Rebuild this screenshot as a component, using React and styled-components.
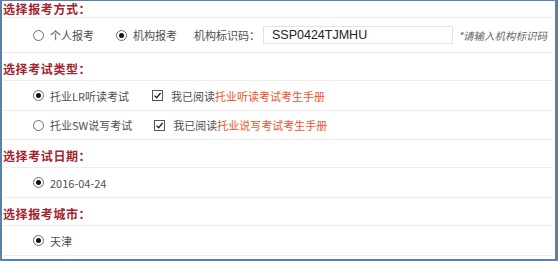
import React from "react";
import styled, { createGlobalStyle } from "styled-components";

const GlobalStyle = createGlobalStyle`
	html, body {
		margin: 0;
		padding: 0;
		background: #ffffff;
	}
	body {
		font-family: "Noto Sans CJK SC", "Liberation Sans", sans-serif;
	}
`;

const Frame = styled.div`
	box-sizing: border-box;
	width: 558px;
	height: 261px;
	border-style: solid;
	border-color: #5d80a8;
	border-width: 1px 3px 2px 2px;
	padding: 0 2px 0 1px;
	background: #fff;
	overflow: hidden;
`;

const Title = styled.div`
	height: 16px;
	line-height: 16px;
	padding: ${({ $first }) => ($first ? "0" : "8px 0 3px")};
	font-size: 12px;
	font-weight: bold;
	color: #a3242e;
	letter-spacing: 0.6px;
`;

const List = styled.div`
	border-top: 1px solid #ececec;
`;

const Row = styled.div`
	display: flex;
	align-items: center;
	height: ${({ $h }) => $h || 28}px;
	padding-left: 30px;
	border-bottom: 1px solid #ececec;
	font-size: 11px;
	color: #505050;
`;

const Option = styled.label`
	display: flex;
	align-items: center;
	gap: 6px;
	margin-right: ${({ $gap }) => $gap || 0}px;
	white-space: nowrap;
`;

const RadioMark = styled.span`
	box-sizing: border-box;
	width: 11px;
	height: 11px;
	border-radius: 50%;
	border: 1px solid #6b6b6b;
	display: flex;
	align-items: center;
	justify-content: center;
	background: #fff;

	&::after {
		content: "";
		width: 5px;
		height: 5px;
		border-radius: 50%;
		background: ${({ $checked }) => ($checked ? "#111" : "transparent")};
	}
`;

const CheckBox = styled.span`
	box-sizing: border-box;
	width: 11px;
	height: 11px;
	border: 1px solid #555;
	display: flex;
	align-items: center;
	justify-content: center;
	background: #fff;
`;

const FieldLabel = styled.span`
	margin-right: 3px;
	white-space: nowrap;
`;

const Input = styled.div`
	box-sizing: border-box;
	width: 190px;
	height: 18px;
	border: 1px solid #e3e3e3;
	padding-left: 8px;
	font-family: "Liberation Sans", Arial, sans-serif;
	font-size: 12.5px;
	line-height: 16px;
	color: #222;
`;

const Hint = styled.span`
	margin-left: 5px;
	font-size: 10.5px;
	font-style: italic;
	color: #666;
	white-space: nowrap;
`;

const Link = styled.span`
	color: #f0531f;
`;

const Radio = ({ checked, children, gap }) => (
	<Option $gap={gap}>
		<RadioMark $checked={checked} />
		{children}
	</Option>
);

const Check = ({ children }) => (
	<Option>
		<CheckBox>
			<svg width="9" height="9" viewBox="0 0 9 9">
				<path d="M1.5 4.6 L3.6 6.7 L7.6 2" fill="none" stroke="#222" strokeWidth="1.3" />
			</svg>
		</CheckBox>
		<span style={{ marginLeft: 2 }}>{children}</span>
	</Option>
);

const App = () => (
	<>
		<GlobalStyle />
		<Frame>
			<Title $first>选择报考方式：</Title>
			<List>
				<Row $h={34}>
					<Radio gap={22}>个人报考</Radio>
					<Radio gap={17} checked>机构报考</Radio>
					<FieldLabel>机构标识码：</FieldLabel>
					<Input>SSP0424TJMHU</Input>
					<Hint>*请输入机构标识码</Hint>
				</Row>
			</List>

			<Title>选择考试类型：</Title>
			<List>
				<Row $h={29}>
					<Radio gap={23} checked>托业LR听读考试</Radio>
					<Check>我已阅读<Link>托业听读考试考生手册</Link></Check>
				</Row>
				<Row $h={28}>
					<Radio gap={22}>托业SW说写考试</Radio>
					<Check>我已阅读<Link>托业说写考试考生手册</Link></Check>
				</Row>
			</List>

			<Title>选择考试日期：</Title>
			<List>
				<Row $h={29}>
					<Radio checked>2016-04-24</Radio>
				</Row>
			</List>

			<Title>选择报考城市：</Title>
			<List>
				<Row $h={29}>
					<Radio checked>天津</Radio>
				</Row>
			</List>
		</Frame>
	</>
);

export default App;
